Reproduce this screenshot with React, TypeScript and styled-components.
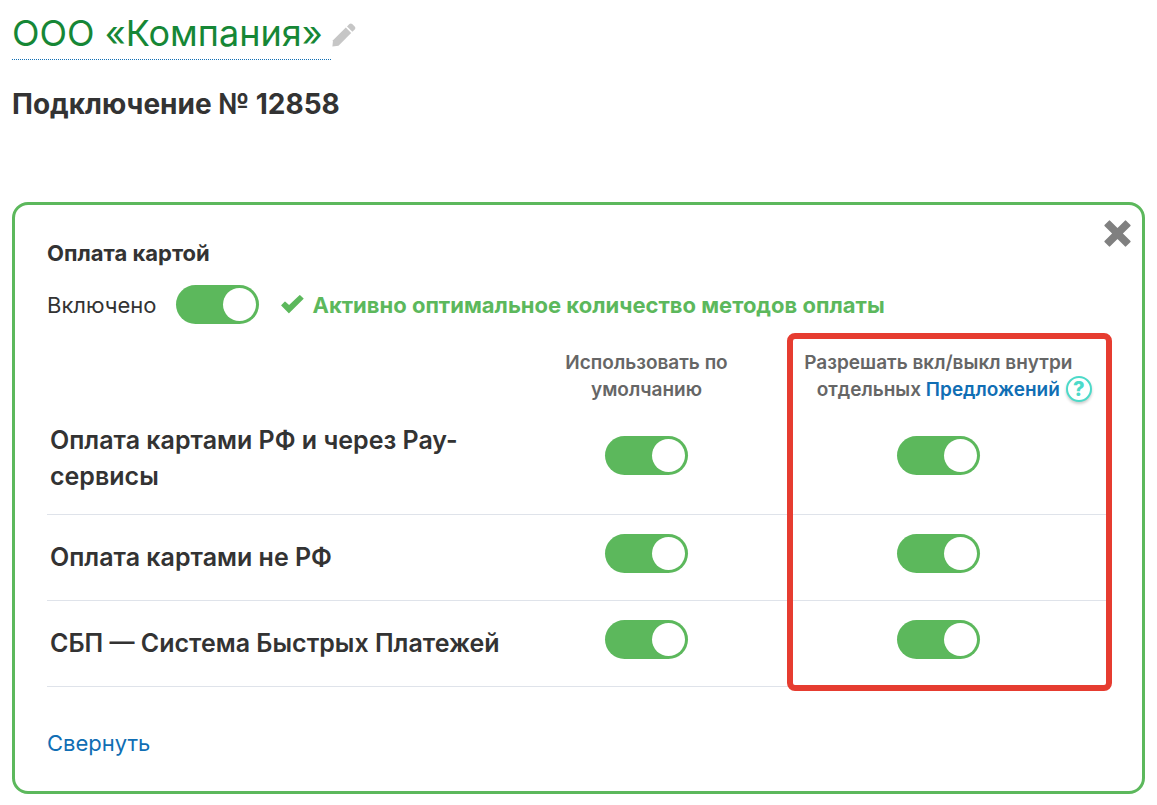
import React from "react";
import styled, { createGlobalStyle } from "styled-components";

const GlobalStyle = createGlobalStyle`
  *, *::before, *::after { box-sizing: border-box; }
  body {
    margin: 0;
    background: #fff;
    color: #333;
    font-family: Inter, "Noto Sans", sans-serif;
    font-size: 22px;
    line-height: 32px;
  }
  h1, h2, h3, p { margin: 0; }
  a { color: #106eb4; text-decoration: none; }
`;

const Page = styled.main`
  padding: 8px 12px;
`;

const TitleRow = styled.header`
  display: flex;
  align-items: flex-start;
  gap: 1px;
`;

const Title = styled.h1`
  padding-right: 8px;
  border-bottom: 1px dotted #106eb4;
  color: #168736;
  font-size: 36px;
  font-weight: 400;
  line-height: 51px;
`;

const IconButton = styled.button`
  display: block;
  padding: 0;
  border: 0;
  background: none;
  cursor: pointer;
  svg { display: block; }
`;

const EditButton = styled(IconButton)`
  padding-top: 15px;
`;

const Subtitle = styled.h2`
  margin-top: 24px;
  font-size: 28px;
  font-weight: 700;
  line-height: 40px;
`;

const Panel = styled.section`
  position: relative;
  margin-top: 78px;
  padding: 32px;
  border: 3px solid #5cb85c;
  border-radius: 16px;
`;

const CloseButton = styled(IconButton)`
  position: absolute;
  top: 15px;
  right: 11px;
`;

const PanelTitle = styled.h3`
  font-size: 22px;
  font-weight: 700;
  line-height: 32px;
`;

const StatusRow = styled.div`
  display: flex;
  align-items: center;
  margin-top: 16px;
`;

const SwitchLabel = styled.label`
  display: flex;
  align-items: center;
  gap: 20px;
`;

const Status = styled.p`
  display: flex;
  align-items: center;
  gap: 8px;
  margin-left: 22px;
  color: #5cb85c;
  font-weight: 700;
`;

const Switch = styled.input.attrs({ type: "checkbox" })`
  appearance: none;
  display: inline-flex;
  align-items: center;
  width: 83px;
  height: 39px;
  margin: 0;
  padding: 3px;
  border-radius: 20px;
  background: #bbb;
  vertical-align: top;
  cursor: pointer;
  &::before {
    content: "";
    width: 33px;
    height: 33px;
    border-radius: 50%;
    background: #fff;
  }
  &:checked {
    justify-content: flex-end;
    background: #5cb85c;
  }
`;

const TableArea = styled.div`
  position: relative;
  margin-top: 23px;
`;

const Highlight = styled.div`
  position: absolute;
  top: -14px;
  right: -2px;
  bottom: -4px;
  width: 325px;
  border: 6px solid #e63c30;
  border-radius: 8px;
  pointer-events: none;
`;

const Table = styled.table`
  width: 100%;
  border-collapse: separate;
  border-spacing: 0;
  table-layout: fixed;
`;

const Column = styled.col<{ $width: string }>`
  width: ${(p) => p.$width};
`;

const HeadCell = styled.th`
  padding: 2px 24px 1px;
  color: #666;
  font-size: 19px;
  font-weight: 600;
  line-height: 27px;
  white-space: nowrap;
`;

const HelpAnchor = styled.span`
  position: relative;
`;

const HelpButton = styled.button`
  position: absolute;
  top: -2px;
  left: calc(100% + 6px);
  width: 26px;
  height: 26px;
  padding: 0;
  border: 2px solid #4cdac9;
  border-radius: 50%;
  background: #fff;
  box-shadow: 0 2px 3px rgba(0, 0, 0, 0.2);
  color: #4cdac9;
  font: 800 20px/22px Inter, sans-serif;
  cursor: pointer;
`;

const NameCell = styled.th`
  padding: 18px 16px 20px 3px;
  border-bottom: 1px solid #dfe3ea;
  font-size: 25px;
  font-weight: 600;
  line-height: 36px;
  text-align: left;
`;

const SwitchCell = styled.td`
  padding: 19px 0 27px;
  border-bottom: 1px solid #dfe3ea;
  text-align: center;
`;

const CollapseLink = styled.a`
  display: inline-block;
  margin-top: 40px;
`;

const PencilIcon = () => (
  <svg width="24" height="24" viewBox="0 0 24 24" fill="#c6c6c6" aria-hidden="true">
    <path d="M.4 23.6 1 17.2 13.8 4.6 19.2 10 6.5 22.7Z" />
    <path d="M15 3.4 17.4 1.1Q18.8-.1 20.2 1.1L22.7 3.6Q24 5 22.7 6.4L20.4 8.8Z" />
  </svg>
);

const CloseIcon = () => (
  <svg width="27" height="27" viewBox="0 0 27 27" fill="#808080" aria-hidden="true">
    <path d="M5.9.5 13.5 8 21.1.5Q21.5.2 21.9.5L26.5 5.1Q26.8 5.5 26.5 5.9L18.9 13.5 26.5 21.1Q26.8 21.5 26.5 21.9L21.9 26.5Q21.5 26.8 21.1 26.5L13.5 19 5.9 26.5Q5.5 26.8 5.1 26.5L.5 21.9Q.2 21.5.5 21.1L8.1 13.5.5 5.9Q.2 5.5.5 5.1L5.1.5Q5.5.2 5.9.5Z" />
  </svg>
);

const CheckIcon = () => (
  <svg width="23" height="20" viewBox="0 0 23 20" fill="#5cb85c" aria-hidden="true">
    <path d="M.4 10 3.6 6.7Q4 6.4 4.4 6.7L8.1 10 18.4.3Q18.8-.1 19.2.3L22.4 3.3Q22.8 3.7 22.4 4.1L8.3 18Q7.9 18.4 7.5 18L.4 10.8Q0 10.4.4 10Z" />
  </svg>
);

const methods = [
  "Оплата картами РФ и через Pay-сервисы",
  "Оплата картами не РФ",
  "СБП — Система Быстрых Платежей",
];

export default function App() {
  return (
    <>
      <GlobalStyle />
      <Page>
        <TitleRow>
          <Title>ООО «Компания»</Title>
          <EditButton aria-label="Изменить название"><PencilIcon /></EditButton>
        </TitleRow>
        <Subtitle>Подключение № 12858</Subtitle>

        <Panel>
          <CloseButton aria-label="Закрыть"><CloseIcon /></CloseButton>
          <PanelTitle>Оплата картой</PanelTitle>
          <StatusRow>
            <SwitchLabel>
              Включено
              <Switch defaultChecked />
            </SwitchLabel>
            <Status><CheckIcon />Активно оптимальное количество методов оплаты</Status>
          </StatusRow>

          <TableArea>
            <Table>
              <colgroup>
                <Column $width="45.1%" />
                <Column $width="22.6%" />
                <Column $width="32.3%" />
              </colgroup>
              <thead>
                <tr>
                  <td />
                  <HeadCell scope="col">Использовать по<br />умолчанию</HeadCell>
                  <HeadCell scope="col">
                    Разрешать вкл/выкл внутри<br />
                    отдельных{" "}
                    <HelpAnchor>
                      <a href="#offers">Предложений</a>
                      <HelpButton aria-label="Справка">?</HelpButton>
                    </HelpAnchor>
                  </HeadCell>
                </tr>
              </thead>
              <tbody>
                {methods.map((name) => (
                  <tr key={name}>
                    <NameCell scope="row">{name}</NameCell>
                    <SwitchCell>
                      <Switch defaultChecked aria-label={`${name}: использовать по умолчанию`} />
                    </SwitchCell>
                    <SwitchCell>
                      <Switch defaultChecked aria-label={`${name}: разрешать вкл/выкл внутри предложений`} />
                    </SwitchCell>
                  </tr>
                ))}
              </tbody>
            </Table>
            <Highlight />
          </TableArea>

          <CollapseLink href="#collapse">Свернуть</CollapseLink>
        </Panel>
      </Page>
    </>
  );
}
